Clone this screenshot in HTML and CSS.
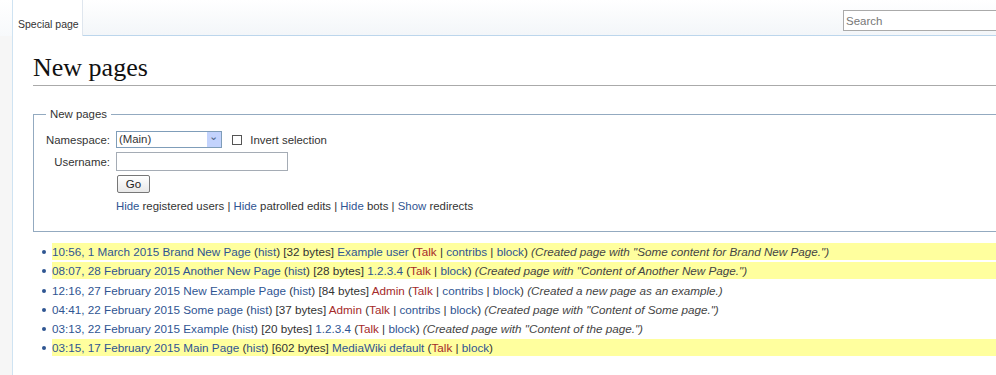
FILE: index.html
```html
<!DOCTYPE html>
<html lang="en">
<head>
    <meta charset="UTF-8">
    <title>New pages</title>
    <link rel="stylesheet" href="styles.css">
</head>
<body>
<div class="head">
    <div class="tab">Special page</div>
    <div class="head-fill">
        <input class="search" type="text" placeholder="Search">
    </div>
</div>

<div class="content">
    <h1>New pages</h1>

    <fieldset class="options">
        <legend>New pages</legend>
        <table class="form">
            <tr>
                <td class="lbl">Namespace:</td>
                <td>
                    <span class="select">(Main)<span class="arrow">&#8964;</span></span>
                    <span class="check"></span>
                    <span class="check-label">Invert selection</span>
                </td>
            </tr>
            <tr>
                <td class="lbl">Username:</td>
                <td><input class="user" type="text"></td>
            </tr>
            <tr>
                <td></td>
                <td><button class="go">Go</button></td>
            </tr>
            <tr>
                <td></td>
                <td class="filters">
                    <a href="#">Hide</a> registered users | <a href="#">Hide</a> patrolled edits | <a href="#">Hide</a> bots | <a href="#">Show</a> redirects
                </td>
            </tr>
        </table>
    </fieldset>

    <ul class="pages">
        <li class="unpatrolled"><a href="#">10:56, 1 March 2015</a> <a href="#">Brand New Page</a> (<a href="#">hist</a>) [32 bytes] <a href="#">Example user</a> (<a class="new" href="#">Talk</a> | <a href="#">contribs</a> | <a href="#">block</a>) <i>(Created page with "Some content for Brand New Page.")</i></li>
        <li class="unpatrolled"><a href="#">08:07, 28 February 2015</a> <a href="#">Another New Page</a> (<a href="#">hist</a>) [28 bytes] <a href="#">1.2.3.4</a> (<a class="new" href="#">Talk</a> | <a href="#">block</a>) <i>(Created page with "Content of Another New Page.")</i></li>
        <li><a href="#">12:16, 27 February 2015</a> <a href="#">New Example Page</a> (<a href="#">hist</a>) [84 bytes] <a class="new" href="#">Admin</a> (<a class="new" href="#">Talk</a> | <a href="#">contribs</a> | <a href="#">block</a>) <i>(Created a new page as an example.)</i></li>
        <li><a href="#">04:41, 22 February 2015</a> <a href="#">Some page</a> (<a href="#">hist</a>) [37 bytes] <a class="new" href="#">Admin</a> (<a class="new" href="#">Talk</a> | <a href="#">contribs</a> | <a href="#">block</a>) <i>(Created page with "Content of Some page.")</i></li>
        <li><a href="#">03:13, 22 February 2015</a> <a href="#">Example</a> (<a href="#">hist</a>) [20 bytes] <a href="#">1.2.3.4</a> (<a class="new" href="#">Talk</a> | <a href="#">block</a>) <i>(Created page with "Content of the page.")</i></li>
        <li class="unpatrolled"><a href="#">03:15, 17 February 2015</a> <a href="#">Main Page</a> (<a href="#">hist</a>) [602 bytes] <a href="#">MediaWiki default</a> (<a class="new" href="#">Talk</a> | <a href="#">block</a>)</li>
    </ul>
</div>
</body>
</html>
```

FILE: styles.css
```css
body {
    margin: 0;
    font-family: "Liberation Sans", Arial, sans-serif;
    background: #f6f6f6;
    color: #333;
    overflow: hidden;
}
a {
    color: #2f5592;
    text-decoration: none;
}
a.new {
    color: #a52a2a;
}

/* header with tab and search */
.head {
    display: flex;
    height: 36px;
    padding-left: 12px;
    background: linear-gradient(to bottom, #ffffff 0%, #f7f9fb 100%);
}
.tab {
    width: 71px;
    height: 36px;
    box-sizing: border-box;
    border-left: 1px solid #cfe3f2;
    border-right: 1px solid #dfe6ee;
    background: #fff;
    font-size: 10.5px;
    color: #333;
    padding: 18px 0 0 5px;
    white-space: nowrap;
}
.head-fill {
    flex: 1;
    display: flex;
    justify-content: flex-end;
    border-bottom: 1px solid #bcd6ec;
    background: linear-gradient(to bottom, #ffffff 0%, #f3f6f9 100%);
}
.search {
    width: 168px;
    height: 21px;
    margin-top: 10px;
    margin-right: -15px;
    box-sizing: border-box;
    border: 1px solid #aaa;
    padding: 1px 2px;
    font-family: inherit;
    font-size: 11.5px;
}
.search::placeholder {
    color: #777;
}

/* main content */
.content {
    margin-left: 12px;
    border-left: 1px solid #cfe3f2;
    background: #fff;
    padding: 16px 0 0 20px;
    height: 339px;
    box-sizing: border-box;
}
h1 {
    font-family: "Liberation Serif", "Times New Roman", serif;
    font-weight: normal;
    font-size: 26px;
    color: #111;
    margin: 0;
    padding-bottom: 1px;
    border-bottom: 1px solid #aaa;
    line-height: 32px;
}

fieldset.options {
    margin: 22px 0 0 0;
    padding: 0 0 17px 10px;
    border: 1px solid #93aac0;
    border-right: none;
    font-size: 11.4px;
}
legend {
    padding: 0 4px;
    margin-left: 2px;
    color: #333;
}
.form {
    border-collapse: collapse;
    margin-top: 9px;
}
.form td {
    padding: 2px 2px;
    vertical-align: middle;
}
.form td.lbl {
    text-align: right;
    padding-right: 4px;
}
.select {
    display: inline-block;
    position: relative;
    width: 106px;
    height: 17px;
    box-sizing: border-box;
    border: 1px solid #7f9db9;
    padding-left: 2px;
    line-height: 15px;
    vertical-align: middle;
}
.arrow {
    position: absolute;
    right: 0;
    top: 0;
    width: 14px;
    height: 15px;
    background: #c3d3fd;
    color: #4d6185;
    font-size: 11px;
    line-height: 9px;
    text-align: center;
}
.check {
    display: inline-block;
    width: 8px;
    height: 8px;
    border: 1px solid #555;
    margin: 0 5px 0 7px;
    vertical-align: middle;
}
.check-label {
    vertical-align: middle;
}
.user {
    width: 172px;
    height: 19px;
    box-sizing: border-box;
    border: 1px solid #a5acb5;
    margin: 0;
}
.go {
    margin: 0 0 0 1px;
    width: 33px;
    height: 18px;
    padding: 0;
    border: 1px solid #777;
    border-radius: 2px;
    background: linear-gradient(to bottom, #fff, #e8e8e8);
    font-family: inherit;
    font-size: 11.5px;
    color: #222;
}
.form td.filters {
    padding-top: 5px;
}

ul.pages {
    margin: 11px 0 0 0;
    padding: 0 0 0 19px;
    font-size: 11.7px;
    list-style: none;
}
ul.pages li {
    position: relative;
    line-height: 17px;
    margin-bottom: 2.3px;
    white-space: nowrap;
}
ul.pages li::before {
    content: "";
    position: absolute;
    left: -10px;
    top: 7px;
    width: 4px;
    height: 4px;
    border-radius: 50%;
    background: #2f5592;
}
ul.pages li.unpatrolled {
    background: #ffff9e;
}
ul.pages i {
    color: #444;
}
```
